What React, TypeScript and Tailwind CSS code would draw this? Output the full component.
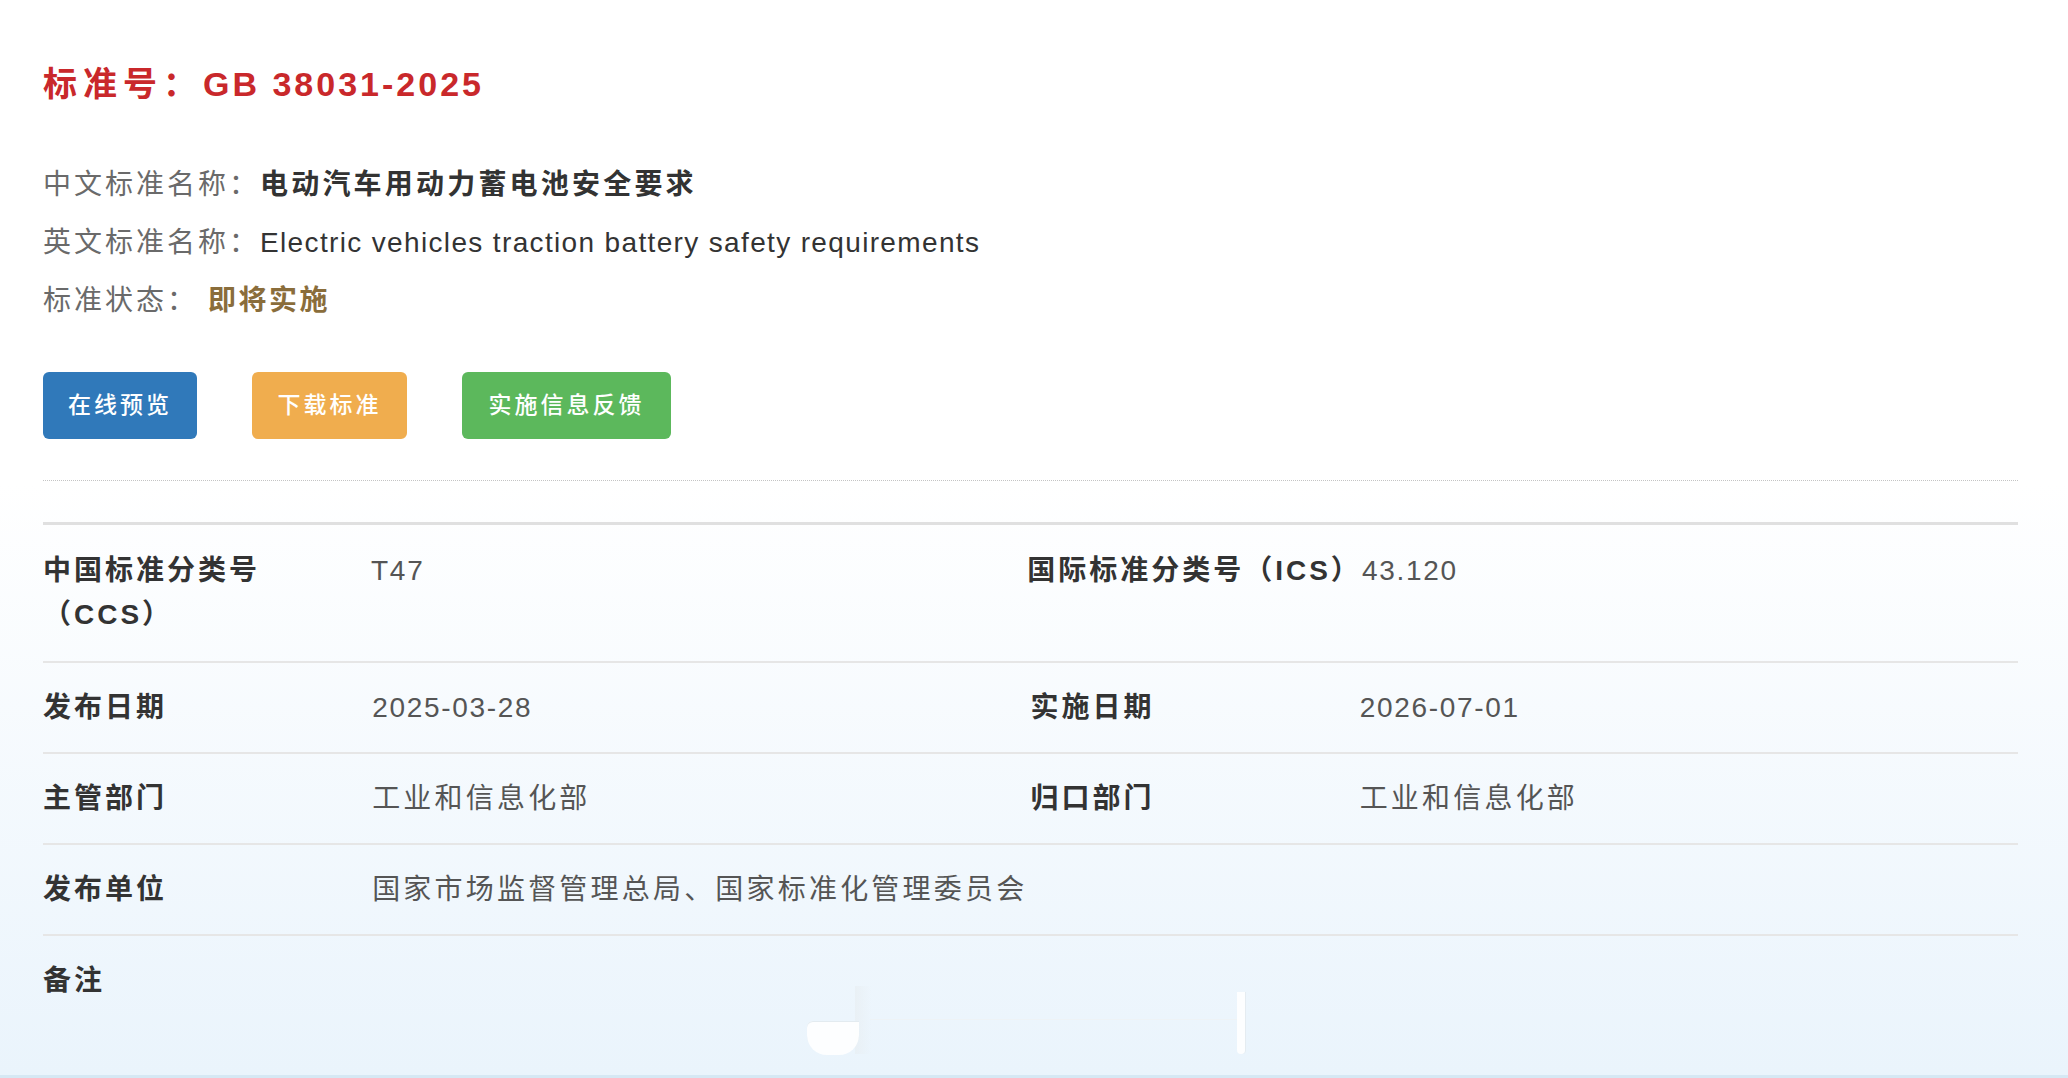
const FONT = "font-['Liberation_Sans','Noto_Sans_CJK_SC',sans-serif]";

type Cell = { label: React.ReactNode; value?: string; wide?: boolean; latin?: boolean };

const rows: Cell[][] = [
  [
    { label: <>中国标准分类号<br />（CCS）</>, value: "T47", latin: true },
    { label: <span className="whitespace-nowrap">国际标准分类号（ICS）</span>, value: "43.120", latin: true },
  ],
  [
    { label: "发布日期", value: "2025-03-28", latin: true },
    { label: "实施日期", value: "2026-07-01", latin: true },
  ],
  [
    { label: "主管部门", value: "工业和信息化部" },
    { label: "归口部门", value: "工业和信息化部" },
  ],
  [{ label: "发布单位", value: "国家市场监督管理总局、国家标准化管理委员会", wide: true }],
];

function InfoLine({ label, children }: { label: string; children: React.ReactNode }) {
  return (
    <div className="flex h-[58px] items-center text-[28px]">
      <span className="tracking-[3px] text-[#6a6a6a]">{label}</span>
      {children}
    </div>
  );
}

export default function App() {
  return (
    <div className={`relative box-border h-[1078px] overflow-hidden border-b-[3px] border-[#d6e8f4] bg-linear-to-b from-white from-45% to-[#eaf4fc] pl-[43px] pr-[50px] pt-[62px] ${FONT}`}>
      {/* title */}
      <h1 className="h-[44px] text-[34px] font-bold leading-[44px] text-[#c9282b]">
        <span className="tracking-[6px]">标准号：</span>
        <span className="tracking-[3px]">GB 38031-2025</span>
      </h1>

      {/* basic info */}
      <div className="mt-[50px]">
        <InfoLine label="中文标准名称：">
          <span className="font-bold tracking-[3.2px] text-[#333]">电动汽车用动力蓄电池安全要求</span>
        </InfoLine>
        <InfoLine label="英文标准名称：">
          <span className="tracking-[1.35px] text-[#333]">Electric vehicles traction battery safety requirements</span>
        </InfoLine>
        <InfoLine label="标准状态：">
          <span className="ml-[10px] font-bold tracking-[2.5px] text-[#8a6d3b]">即将实施</span>
        </InfoLine>
      </div>

      {/* actions */}
      <div className="mt-[42px] flex gap-[55px]">
        <button className="h-[67px] w-[154px] rounded-md bg-[#3079ba] text-[23px] font-medium tracking-[3px] text-white">在线预览</button>
        <button className="h-[67px] w-[155px] rounded-md bg-[#f0ad4e] text-[23px] font-medium tracking-[3px] text-white">下载标准</button>
        <button className="h-[67px] w-[209px] rounded-md bg-[#5cb85c] text-[23px] font-medium tracking-[3px] text-white">实施信息反馈</button>
      </div>

      <div className="mt-[41px] border-t border-dotted border-[#c4c4c4]" />

      {/* detail table */}
      <div className="mt-[41px] border-t-[3px] border-[#e0e0e0]">
        {rows.map((row, i) => (
          <div
            key={i}
            className={`grid grid-cols-[1fr_2fr_1fr_2fr] border-b-2 border-[#e6e6e6] text-[28px] ${i === 0 ? "py-[24px] leading-[44px]" : "py-[23px] leading-[43px]"}`}
          >
            {row.map((c, j) => (
              <div key={j} className="contents">
                <div className="font-bold tracking-[3px] text-[#333]">{c.label}</div>
                <div className={`${c.wide ? "col-span-3" : ""} ${c.latin ? "tracking-[1.7px]" : "tracking-[3.2px]"} text-[#555]`}>{c.value}</div>
              </div>
            ))}
          </div>
        ))}
        <div className="grid grid-cols-[1fr_5fr] py-[23px] text-[28px] leading-[43px]">
          <div className="font-bold tracking-[3px] text-[#333]">备注</div>
          <div />
        </div>
      </div>

      {/* faint overlay marks at the bottom */}
      <div className="absolute left-[855px] top-[986px] h-[68px] w-[16px] bg-linear-to-r from-[#e8eef2] to-transparent opacity-70" />
      <div className="absolute left-[807px] top-[1021px] h-[34px] w-[52px] rounded-b-[20px] rounded-tl-[6px] bg-white/90 shadow-[inset_0_1px_0_#e3ebf0]" />
      <div className="absolute left-[870px] top-[1019px] h-px w-[370px] bg-[#eef3f6]" />
      <div className="absolute left-[1237px] top-[992px] h-[62px] w-[8px] rounded-b-full bg-white/90 shadow-[1px_0_0_#e5ecf1]" />
    </div>
  );
}
